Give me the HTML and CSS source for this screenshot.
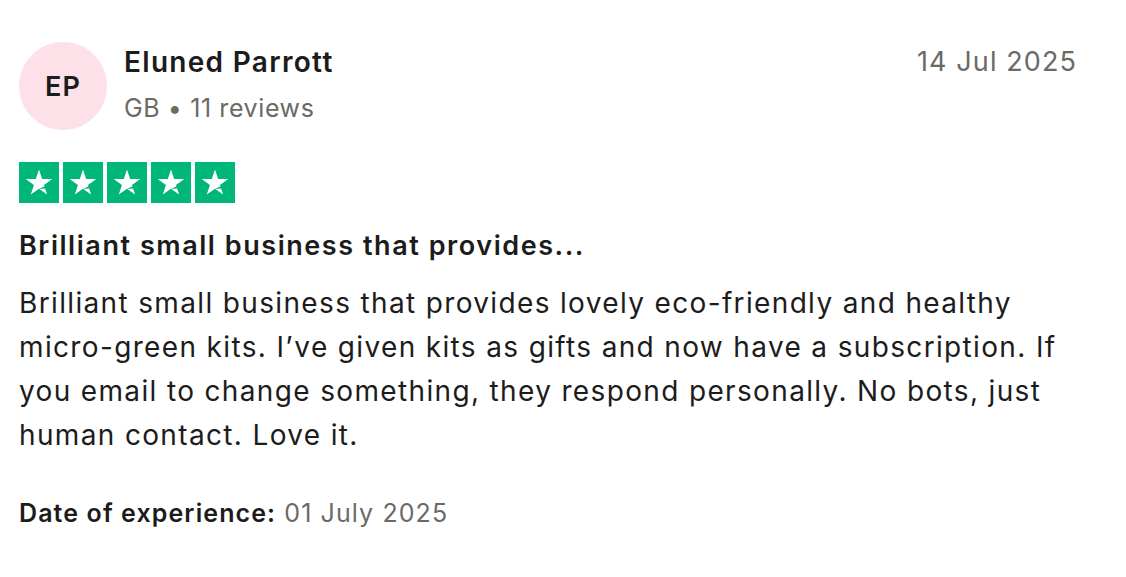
FILE: index.html
```html
<!DOCTYPE html>
<html>
    <head>
        <meta charset=utf-8>
        <title>Review</title>
        <link rel="stylesheet" href="styles.css">
    </head>
    <body>
        <article class="review">
            <header class="review-head">
                <div class="avatar">EP</div>
                <div class="consumer">
                    <div class="name">Eluned Parrott</div>
                    <div class="meta">GB &bull; 11 reviews</div>
                </div>
                <time class="date">14 Jul 2025</time>
            </header>

            <div class="stars">
                <span class="star"><svg viewBox="0 0 40 40"><path d="M20 7.5l3.1 9.6h10.1l-8.2 5.9 3.1 9.6-8.1-5.9-8.2 5.9 3.1-9.6-8.2-5.9h10.1z" fill="#fff"/><path d="M26.4 26.5l-0.7-2.3-5.7 2.7z" fill="#00b67a"/></svg></span>
                <span class="star"><svg viewBox="0 0 40 40"><path d="M20 7.5l3.1 9.6h10.1l-8.2 5.9 3.1 9.6-8.1-5.9-8.2 5.9 3.1-9.6-8.2-5.9h10.1z" fill="#fff"/><path d="M26.4 26.5l-0.7-2.3-5.7 2.7z" fill="#00b67a"/></svg></span>
                <span class="star"><svg viewBox="0 0 40 40"><path d="M20 7.5l3.1 9.6h10.1l-8.2 5.9 3.1 9.6-8.1-5.9-8.2 5.9 3.1-9.6-8.2-5.9h10.1z" fill="#fff"/><path d="M26.4 26.5l-0.7-2.3-5.7 2.7z" fill="#00b67a"/></svg></span>
                <span class="star"><svg viewBox="0 0 40 40"><path d="M20 7.5l3.1 9.6h10.1l-8.2 5.9 3.1 9.6-8.1-5.9-8.2 5.9 3.1-9.6-8.2-5.9h10.1z" fill="#fff"/><path d="M26.4 26.5l-0.7-2.3-5.7 2.7z" fill="#00b67a"/></svg></span>
                <span class="star"><svg viewBox="0 0 40 40"><path d="M20 7.5l3.1 9.6h10.1l-8.2 5.9 3.1 9.6-8.1-5.9-8.2 5.9 3.1-9.6-8.2-5.9h10.1z" fill="#fff"/><path d="M26.4 26.5l-0.7-2.3-5.7 2.7z" fill="#00b67a"/></svg></span>
            </div>

            <h2 class="title">Brilliant small business that provides...</h2>
            <p class="text">Brilliant small business that provides lovely eco-friendly and healthy micro-green kits. I’ve given kits as gifts and now have a subscription. If you email to change something, they respond personally. No bots, just human contact. Love it.</p>

            <p class="experience"><strong>Date of experience:</strong> 01 July 2025</p>
        </article>
    </body>
</html>
```

FILE: styles.css
```css
html, body {
    margin: 0;
    padding: 0;
    background: #fff;
}

body {
    font-family: Inter, "Noto Sans", sans-serif;
    color: #1c1c1c;
}

.review {
    width: 1058px;
    padding: 42px 0 0 19px;
}

.review-head {
    display: flex;
    align-items: flex-start;
}

.avatar {
    width: 88px;
    height: 88px;
    border-radius: 50%;
    background: #fde0e8;
    color: #1c1c1c;
    font-size: 27px;
    font-weight: 600;
    letter-spacing: 1px;
    display: flex;
    align-items: center;
    justify-content: center;
    flex-shrink: 0;
}

.consumer {
    margin-left: 17px;
    flex: 1;
}

.name {
    font-size: 28px;
    font-weight: 600;
    line-height: 40px;
    letter-spacing: 1.3px;
}

.meta {
    font-size: 25px;
    line-height: 34px;
    letter-spacing: 0.6px;
    color: #6b6a65;
    margin-top: 9px;
}

.date {
    font-size: 27px;
    line-height: 40px;
    letter-spacing: 1.1px;
    color: #6b6a65;
}

.stars {
    display: flex;
    gap: 4px;
    margin-top: 32px;
}

.star {
    width: 40px;
    height: 41px;
    background: #00b67a;
    display: block;
}

.star svg {
    width: 40px;
    height: 40px;
    display: block;
}

.title {
    font-size: 27px;
    font-weight: 600;
    line-height: 36px;
    letter-spacing: 1.55px;
    margin: 25px 0 0;
}

.text {
    font-size: 28px;
    line-height: 44px;
    letter-spacing: 1.35px;
    margin: 17px 0 0;
}

.experience {
    font-size: 25px;
    line-height: 34px;
    letter-spacing: 1.1px;
    color: #6b6a65;
    margin: 39px 0 0;
}

.experience strong {
    color: #1c1c1c;
    font-weight: 600;
}
```
